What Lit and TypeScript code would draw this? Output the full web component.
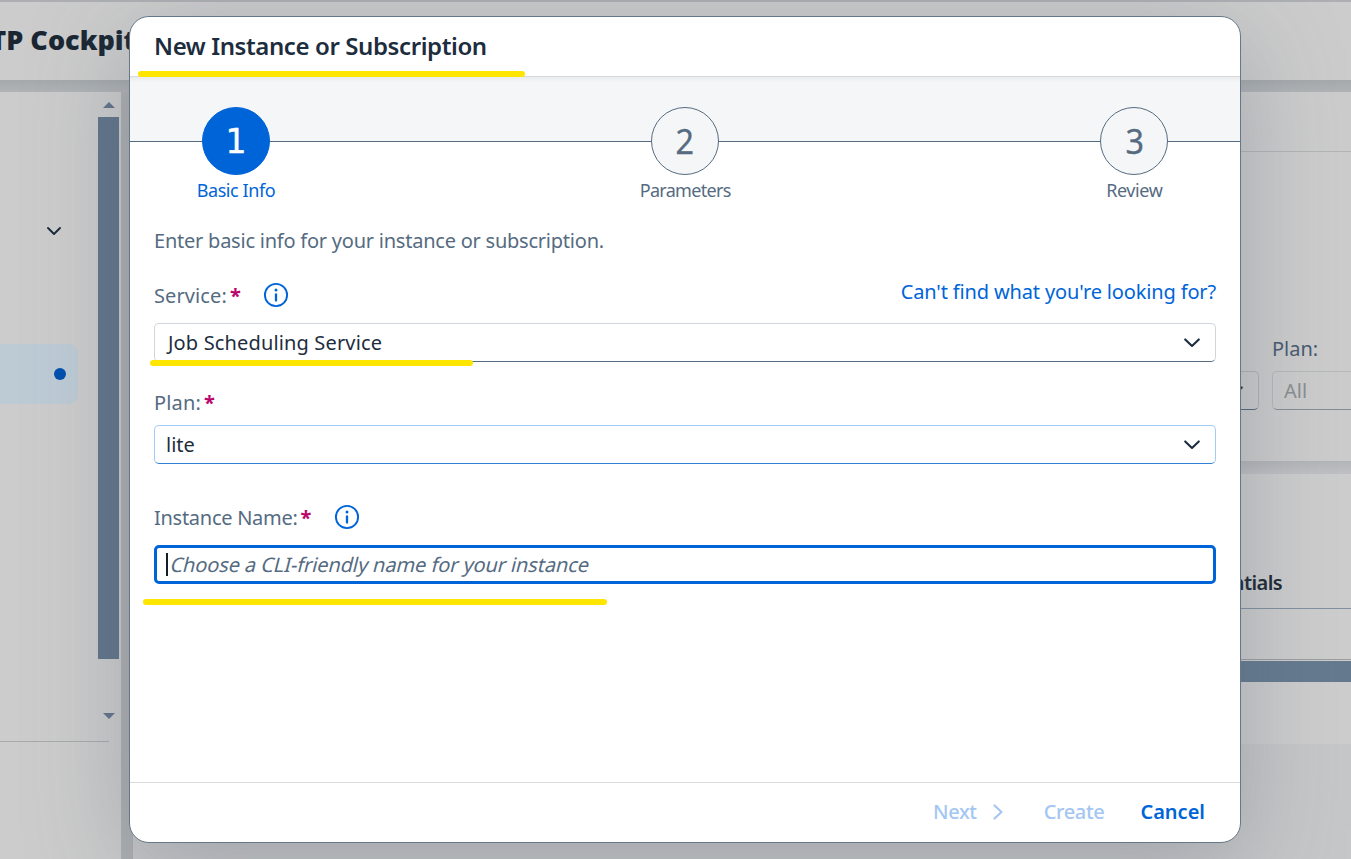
import { LitElement, html, css } from "lit";
import { customElement, property } from "lit/decorators.js";

const chevron = html`<svg viewBox="0 0 18 12" width="18" height="12" fill="none" stroke="#1d2d3e" stroke-width="2.1" stroke-linecap="round" stroke-linejoin="round"><path d="M2.2 2.4 9 9 15.8 2.4" /></svg>`;

const info = html`<svg class="info" viewBox="0 0 26 26" width="26" height="26" fill="none" stroke="#0064d9"><circle cx="13" cy="13" r="11.1" stroke-width="1.9" /><circle cx="13" cy="7.9" r="1.5" fill="#0064d9" stroke="none" /><path d="M13 12.5v6" stroke-width="2.3" stroke-linecap="round" /></svg>`;

@customElement("cockpit-page")
export class CockpitPage extends LitElement {
  static styles = css`
    :host { display: flex; flex-direction: column; height: 859px; background: #c6c7c8; color: #1a2733; }
    * { box-sizing: border-box; }
    .shell { height: 80px; flex: none; border-top: 2px solid #adafb2; background: #ccc; display: flex; align-items: center; padding-bottom: 2px; z-index: 1; }
    .brand { width: 136px; flex: none; white-space: nowrap; display: flex; justify-content: flex-end; font: 900 27px/36px "Noto Sans", "Open Sans", sans-serif; letter-spacing: 0; }
    .gap { height: 12px; flex: none; background: linear-gradient(#a5a9ac, #acb0b3 60%, #b0b3b6); }
    .body { flex: 1; display: flex; min-height: 0; }
    .side { width: 121px; display: flex; background: #ccc; flex: none; }
    .nav { width: 98px; display: flex; flex-direction: column; }
    .group { height: 252px; padding: 128px 0 0 46px; }
    .selected { height: 60px; width: 78px; background: #bdcbd5; border-radius: 0 9px 9px 0; display: flex; align-items: center; justify-content: flex-end; padding-right: 12px; }
    .dot { width: 12px; height: 12px; border-radius: 50%; background: #0050ae; }
    .rule { width: 109px; height: 1px; background: #a8aaac; margin-top: 337px; }
    .bar { width: 21px; display: flex; flex-direction: column; align-items: center; }
    .up, .down { border: 6px solid transparent; height: 0; width: 0; }
    .up { border-bottom: 6px solid #607489; border-top: 0; margin: 10px 0 9px; }
    .down { border-top: 6px solid #607489; border-bottom: 0; margin-top: 54px; }
    .thumb { width: 21px; height: 542px; background: #607489; }
    .strip { width: 12px; flex: none; background: #adb0b2; }
    .main { flex: 1; display: flex; flex-direction: column; min-width: 0; }
    .filters { height: 369px; background: #ccc; }
    .tabs { height: 60px; border-bottom: 1px solid #b2b4b6; }
    .row { display: flex; gap: 13px; padding-top: 182px; align-items: flex-end; overflow: hidden; }
    .col { display: flex; flex-direction: column; gap: 7px; flex: none; }
    .lab { font-size: 20px; line-height: 30px; color: #485b71; }
    .pick { height: 39px; flex: none; border: 1px solid #adb2b8; border-bottom-color: #53677b; border-radius: 5px; display: flex; align-items: center; padding: 0 11px; font-size: 20px; color: #8a8e92; }
    .first { width: 1126px; justify-content: flex-end; padding-right: 14px; }
    .second { width: 240px; border-color: #b6b8ba; border-bottom-color: #858e98; }
    .between { height: 13px; background: linear-gradient(#b3b5b8, #bfc1c4); }
    .table { height: 270px; background: #cdcdcd; }
    .head { height: 135px; border-bottom: 1px solid #8290a0; padding: 94px 69px 0 0; text-align: right; font: 600 20px/30px "Noto Sans", sans-serif; letter-spacing: -0.6px; }
    .line { height: 51px; border-bottom: 1px solid #9b9e9f; }
    .hbar { height: 21px; background: #657a8f; margin-top: 1px; }
  `;

  render() {
    return html`
      <div class="shell"><div class="brand">TP Cockpit</div></div>
      <div class="gap"></div>
      <div class="body">
        <div class="side">
          <div class="nav">
            <div class="group"><svg viewBox="0 0 16 12" width="16" height="12" fill="none" stroke="#1b2a39" stroke-width="1.9" stroke-linecap="round" stroke-linejoin="round"><path d="M2 3 8 9 14 3" /></svg></div>
            <div class="selected"><span class="dot"></span></div>
            <div class="rule"></div>
          </div>
          <div class="bar"><span class="up"></span><span class="thumb"></span><span class="down"></span></div>
        </div>
        <div class="strip"></div>
        <div class="main">
          <div class="filters">
            <div class="tabs"></div>
            <div class="row">
              <div class="pick first">${chevron}</div>
              <div class="col"><span class="lab">Plan:</span><div class="pick second">All</div></div>
            </div>
          </div>
          <div class="between"></div>
          <div class="table">
            <div class="head">Credentials</div>
            <div class="line"></div>
            <div class="hbar"></div>
          </div>
        </div>
      </div>`;
  }
}

@customElement("wizard-step")
export class WizardStep extends LitElement {
  @property() num = "";
  @property() label = "";
  @property({ type: Boolean, reflect: true }) active = false;

  static styles = css`
    :host { display: flex; flex-direction: column; align-items: center; width: 120px; color: #556b81; }
    .ring { box-sizing: border-box; width: 68px; height: 68px; border: 1px solid #556b81; border-radius: 50%; background: #f5f6f7; display: flex; align-items: center; justify-content: center; font-size: 34px; line-height: 66px; }
    .num { display: block; transform: scaleX(0.95); -webkit-text-stroke: 0.3px; }
    .label { font-size: 18px; line-height: 30px; letter-spacing: -0.4px; white-space: nowrap; }
    :host([label="Parameters"]) .label { letter-spacing: -0.7px; }
    :host([active]) .ring { background: #0064d9; border-color: #0064d9; color: #fff; font-family: "DejaVu Sans", sans-serif; font-size: 33px; padding-top: 2px; }
    :host([active]) .num { transform: none; -webkit-text-stroke: 0.4px; }
    :host([active]) .label { color: #0064d9; }
  `;

  render() {
    return html`<div class="ring"><span class="num">${this.num}</span></div><div class="label">${this.label}</div>`;
  }
}

@customElement("app-root")
export class AppRoot extends LitElement {
  static styles = css`
    :host { display: block; position: relative; width: 1351px; height: 859px; overflow: hidden; font-family: "Noto Sans", "Open Sans", sans-serif; }
    * { box-sizing: border-box; }
    .dialog { position: absolute; left: 129px; top: 16px; width: 1112px; height: 827px; border: 1px solid #667888; border-radius: 20px; background: #fff; display: flex; flex-direction: column; font-size: 20px; line-height: 30px; color: #556b81; box-shadow: 0 25px 100px rgba(85, 95, 110, 0.34); z-index: 2; }
    .title { height: 60px; flex: none; padding: 13px 24px 0; border-bottom: 1px solid #d9dadb; font-size: 24px; line-height: 32px; font-weight: 600; letter-spacing: -0.4px; color: #1d2d3e; }
    .steps { height: 65px; flex: none; background: linear-gradient(#eaebec, #f5f6f7 5px); border-bottom: 1px solid #556b81; display: flex; justify-content: space-between; padding: 30px 45.7px 0 46px; }
    .content { flex: 1; padding: 84px 24px 0; display: flex; flex-direction: column; }
    .intro { letter-spacing: -0.23px; }
    .labels { display: flex; align-items: center; height: 30px; }
    .star { color: #ba066c; font-weight: 700; font-size: 20px; width: 11px; margin-left: 3px; line-height: 30px; }
    .info { margin-left: 22px; margin-bottom: 2px; }
    .service { margin-top: 25px; letter-spacing: 0.1px; }
    .link { margin-left: auto; color: #0064d9; padding-bottom: 8px; letter-spacing: -0.15px; }
    .select { height: 39px; flex: none; border: 1px solid #d0d5dc; border-bottom-color: #556b81; border-radius: 5px; display: flex; align-items: center; justify-content: space-between; padding: 0 14px 0 11px; color: #1d2d3e; margin-top: 12px; }
    .job { padding-left: 2px; letter-spacing: 0.15px; }
    .select.hover { border-color: #a3cbf8; border-bottom-color: #2f80d6; margin-top: 7px; }
    .plan { margin-top: 26px; letter-spacing: 0.15px; }
    .instance { margin-top: 39px; }
    .name { letter-spacing: -0.27px; }
    .input { height: 39px; flex: none; margin-top: 12px; border: 3px solid #0064d9; border-radius: 5px; display: flex; align-items: center; padding-left: 9px; }
    .caret { width: 2px; height: 23px; background: #131e29; margin-right: 3px; }
    .hint { display: block; transform: skewX(-14deg); letter-spacing: -0.1px; }
    .footer { height: 60px; flex: none; border-top: 1px solid #d9dadb; display: flex; align-items: center; justify-content: flex-end; padding: 0 35px 2px 0; font-weight: 500; color: #a3c6f2; }
    .next { display: flex; align-items: center; gap: 15px; margin-right: 40px; letter-spacing: -0.4px; }
    .create { margin-right: 36px; letter-spacing: -0.35px; }
    .cancel { color: #0064d9; font-weight: 600; }
    .mark { position: absolute; height: 6px; border-radius: 3px; background: #ffe600; z-index: 3; }
    .m1 { left: 138px; top: 71px; width: 387px; }
    .m2 { left: 150px; top: 360px; width: 323px; }
    .m3 { left: 143px; top: 599px; width: 464px; }
  `;

  render() {
    return html`
      <cockpit-page></cockpit-page>
      <section class="dialog">
        <header class="title">New Instance or Subscription</header>
        <div class="steps">
          <wizard-step num="1" label="Basic Info" active></wizard-step>
          <wizard-step num="2" label="Parameters"></wizard-step>
          <wizard-step num="3" label="Review"></wizard-step>
        </div>
        <div class="content">
          <div class="intro">Enter basic info for your instance or subscription.</div>
          <div class="labels service"><span>Service:</span><span class="star">*</span>${info}<span class="link">Can't find what you're looking for?</span></div>
          <div class="select"><span class="job">Job Scheduling Service</span>${chevron}</div>
          <div class="labels plan"><span>Plan:</span><span class="star">*</span></div>
          <div class="select hover"><span>lite</span>${chevron}</div>
          <div class="labels instance"><span class="name">Instance Name:</span><span class="star">*</span>${info}</div>
          <div class="input"><span class="caret"></span><span class="hint">Choose a CLI-friendly name for your instance</span></div>
        </div>
        <footer class="footer">
          <span class="next"><span>Next</span><svg viewBox="0 0 12 18" width="12" height="18" fill="none" stroke="#a3c6f2" stroke-width="2.2" stroke-linecap="round" stroke-linejoin="round"><path d="M2.5 2.5 9.5 9 2.5 15.5" /></svg></span>
          <span class="create">Create</span>
          <span class="cancel">Cancel</span>
        </footer>
      </section>
      <span class="mark m1"></span><span class="mark m2"></span><span class="mark m3"></span>`;
  }
}
